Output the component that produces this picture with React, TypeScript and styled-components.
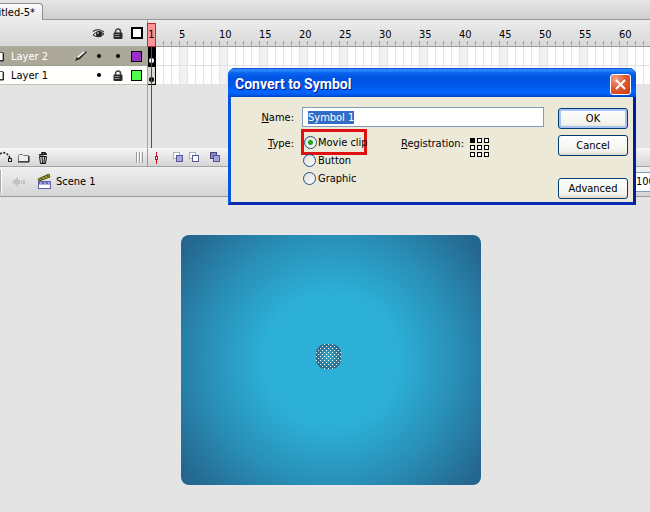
import React, { useEffect, useRef, useState } from 'react';
import styled, { createGlobalStyle, css } from 'styled-components';

const GlobalStyle = createGlobalStyle`
  * { box-sizing: border-box; }
  html, body { height: 100%; }
  body {
    margin: 0;
    overflow: hidden;
    background: #e4e4e4;
    color: #000;
    font-family: "DejaVu Sans Condensed", "Noto Sans", sans-serif;
    font-size: 11px;
    line-height: 14px;
  }
  #root { height: 100%; }
  button, input { font: inherit; color: inherit; }
  svg { flex: none; }
`;

const Workspace = styled.div`
  position: relative;
  display: flex;
  flex-direction: column;
  height: 100%;
  overflow: hidden;
`;

const TabBar = styled.header`
  display: flex;
  align-items: flex-end;
  height: 20px;
  background: linear-gradient(#e6e6e6, #cfcfcf);
  border-bottom: 1px solid #999;
`;

const DocumentTab = styled.button`
  display: flex;
  justify-content: flex-end;
  align-items: center;
  width: 43px;
  height: 17px;
  margin-bottom: -1px;
  padding: 1px 7px 0 0;
  border: 1px solid #8e8e8e;
  border-width: 1px 1px 0 0;
  border-radius: 0 4px 0 0;
  background: linear-gradient(#fafafa, #e9e9e9);
  white-space: nowrap;
  overflow: hidden;
`;

const Timeline = styled.section`
  position: relative;
  display: grid;
  grid-template-columns: 148px 1fr;
  grid-template-rows: 128px 19px;
`;

const LayerPanel = styled.div`
  border-right: 1px solid #a9a191;
`;

const layerColumns = css`
  display: grid;
  grid-template-columns: 72px 17px 19px 19px 19px;
  align-items: center;
  justify-items: center;
`;

const LayerHeader = styled.div`
  ${layerColumns}
  height: 27px;
  background: linear-gradient(#ececec, #d8d8d8);
  border-bottom: 1px solid #b4b0a6;
`;

const LayerRow = styled.div<{ $active?: boolean }>`
  ${layerColumns}
  height: 19px;
  background: ${p => (p.$active ? '#aca899' : '#fffffd')};
  color: ${p => (p.$active ? '#fff' : '#000')};
  border-bottom: 1px solid ${p => (p.$active ? '#a39f91' : '#c8c5b8')};
`;

const LayerName = styled.span`
  display: flex;
  align-items: center;
  gap: 7px;
  padding-top: 2px;
  justify-self: start;
  white-space: nowrap;
`;

const Swatch = styled.span<{ $color: string; $thick?: boolean }>`
  width: ${p => (p.$thick ? 12 : 11)}px;
  height: ${p => (p.$thick ? 12 : 11)}px;
  background: ${p => p.$color};
  border: ${p => (p.$thick ? 2 : 1)}px solid #000;
`;

const Dot = styled.span`
  width: 4px;
  height: 4px;
  border-radius: 50%;
  background: #000;
`;

const FramePanel = styled.div`
  min-width: 0;
  overflow: hidden;
`;

const Ruler = styled.div`
  display: flex;
  height: 27px;
  padding: 8px 0 0 31px;
  background:
    repeating-linear-gradient(90deg, transparent 0 7px, #9a9a9a 7px 8px) 0 21px / 100% 4px no-repeat,
    linear-gradient(#ececec, #d8d8d8);
  border-bottom: 1px solid #999;
`;

const RulerNumber = styled.span`
  flex: 0 0 40px;
`;

const FrameRow = styled.div`
  height: 19px;
  border-bottom: 1px solid #e2e2e2;
  background:
    repeating-linear-gradient(90deg, transparent 0 7px, #e4e4e4 7px 8px),
    repeating-linear-gradient(90deg, transparent 0 32px, #f1f1f1 32px 40px),
    #fff;
`;

const Keyframe = styled.div<{ $filled?: boolean }>`
  display: flex;
  justify-content: center;
  align-items: flex-end;
  width: 8px;
  height: 19px;
  padding-bottom: 2px;
  border: 1px solid #000;
  border-left-width: 0;
  background: ${p => (p.$filled ? '#000' : '#d8d8d0')};

  &::after {
    content: '';
    width: 5px;
    height: 5px;
    border-radius: 50%;
    background: ${p => (p.$filled ? '#fff' : '#000')};
  }
`;

const Playhead = styled.div`
  position: absolute;
  left: 147px;
  top: 3px;
  width: 9px;
  height: 24px;
  padding-top: 4px;
  background: #ff9494;
  border: 1px solid #c4262e;
  text-align: center;
  line-height: 14px;
`;

const PlayheadLine = styled.div`
  position: absolute;
  z-index: 1;
  left: 151px;
  top: 27px;
  bottom: 19px;
  width: 1px;
  background: #d80c2c;
`;

const ToolStrip = styled.div<{ $divided?: boolean }>`
  display: flex;
  align-items: center;
  background: linear-gradient(#f5f5f5, #d5d5d5);
  border-top: 1px solid #f8f8f8;
  border-bottom: 1px solid #a4a4a4;
  border-right: ${p => (p.$divided ? '1px solid #999' : '0')};
`;

const IconButton = styled.button<{ $width: number }>`
  display: flex;
  justify-content: center;
  align-items: center;
  width: ${p => p.$width}px;
  height: 16px;
  padding: 0;
  border: 0;
  background: none;
`;

const Grip = styled.span`
  width: 7px;
  height: 11px;
  margin-left: auto;
  margin-right: 4px;
  background: repeating-linear-gradient(90deg, #999 0 1px, #fff 1px 2px, transparent 2px 3px);
`;

const EditBar = styled.nav`
  display: flex;
  align-items: center;
  height: 30px;
  background: linear-gradient(#f0f0f0, #d4d4d4);
  border-bottom: 1px solid #999;
`;

const EditBarGrip = styled.span`
  width: 2px;
  height: 23px;
  background: #aaa;
  border-right: 1px solid #fff;
`;

const SceneLink = styled.a`
  display: flex;
  align-items: center;
  gap: 4px;
  margin-left: 2px;
  color: inherit;
  text-decoration: none;
`;

const ZoomField = styled.input`
  width: 60px;
  height: 20px;
  margin-left: auto;
  margin-right: -44px;
  padding: 0 0 0 1px;
  border: 1px solid #7f9db9;
  background: #fff;
`;

const ZoomSpacer = styled.div`
  display: flex;
  flex: 1;
  overflow: hidden;
`;

const Stage = styled.main`
  display: flex;
  flex: 1;
  justify-content: center;
  align-items: flex-start;
  padding: 38px 0 0 12px;
  background: #e4e4e4;
`;

const Artwork = styled.div`
  display: flex;
  justify-content: center;
  align-items: center;
  width: 300px;
  height: 250px;
  padding: 0 4px 6px 0;
  border-radius: 8px;
  background: radial-gradient(circle at 50% 50%, #2cb0d8 0 66px, #298fb7 125px, #24668e 185px);
  box-shadow: 0 0 1px #fff;
`;

const Dialog = styled.form`
  position: absolute;
  z-index: 2;
  left: 228px;
  right: 14px;
  top: 68px;
  border: solid #0831c9;
  border-width: 0 3px 3px;
  border-color: #0831d9 #001ea0 #0a28b0 #0855dd;
  border-radius: 7px 7px 0 0;
  background: #0855dd;
`;

const TitleBar = styled.div`
  display: flex;
  align-items: center;
  justify-content: space-between;
  height: 29px;
  margin: 0 -3px;
  padding: 3px 5px 0 7px;
  border-radius: 7px 7px 0 0;
  background: linear-gradient(#0a4fcb 0, #3190ff 2px, #0a63ee 5px, #0054e3 10px, #0056e8 17px, #0066ff 24px, #0061f5 26px, #0040c4 29px);
`;

const DialogTitle = styled.h1`
  margin: 0;
  color: #fff;
  font-family: Roboto, sans-serif;
  font-size: 14px;
  font-weight: 700;
  line-height: 18px;
  text-shadow: 1px 1px #0f1089;
`;

const CloseButton = styled.button`
  display: flex;
  align-items: center;
  justify-content: center;
  width: 21px;
  height: 21px;
  padding: 0;
  border: 1px solid #fff;
  border-radius: 3px;
  background: radial-gradient(circle at 25% 20%, #f2a184, #e25b36 45%, #c5390f);
`;

const DialogBody = styled.div`
  display: grid;
  grid-template-columns: 1fr 70px;
  column-gap: 14px;
  padding: 10px 5px 3px 0;
  background: #ece9d8;
`;

const Fields = styled.div`
  display: grid;
  grid-template-columns: 63px 1fr;
  grid-template-rows: 20px auto;
  column-gap: 8px;
  row-gap: 2px;
`;

const FieldLabel = styled.label`
  padding-top: 4px;
  text-align: right;
`;

const TypeLabel = styled.span`
  padding-top: 8px;
  text-align: right;
`;

const NameInput = styled.input`
  width: 100%;
  height: 20px;
  padding: 0 0 0 5px;
  border: 1px solid #7f9db9;
  outline: none;
  background: #fff;

  &::selection { background: rgba(49, 106, 197, 0.99); color: #fff; }
`;

const TypeRow = styled.div`
  display: flex;
  align-items: flex-start;
`;

const RadioGroup = styled.div`
  display: flex;
  flex-direction: column;
  width: 100px;
  margin-left: -1px;
`;

const RadioLabel = styled.label<{ $marked?: boolean }>`
  display: flex;
  align-items: center;
  align-self: flex-start;
  gap: ${p => (p.$marked ? 1 : 2)}px;
  width: 66px;
  height: ${p => (p.$marked ? 26 : 18)}px;
  padding-left: ${p => (p.$marked ? 0 : 2)}px;
  border: ${p => (p.$marked ? '3px solid #e01010' : '0')};
  white-space: nowrap;

  &:nth-child(2) { margin-top: -4px; }
`;

const RadioText = styled.span`
  padding-top: 2px;
`;

const Radio = styled.input`
  appearance: none;
  flex: none;
  width: 13px;
  height: 13px;
  margin: 0;
  border: 1px solid #1d5281;
  border-radius: 50%;
  background: linear-gradient(135deg, #dcdcd7, #fff);

  &:checked {
    background: radial-gradient(circle, #21a121 0 2px, transparent 3px), linear-gradient(135deg, #dcdcd7, #fff);
  }
`;

const RegistrationLabel = styled.span`
  padding-top: 8px;
`;

const RegistrationGrid = styled.div`
  display: grid;
  grid-template-columns: repeat(3, 5px);
  gap: 2px;
  margin: 9px 0 0 6px;
`;

const RegistrationPoint = styled.button<{ $selected: boolean }>`
  width: 5px;
  height: 5px;
  padding: 0;
  border: 1px solid #000;
  background: ${p => (p.$selected ? '#000' : '#fff')};
`;

const Actions = styled.div`
  display: flex;
  flex-direction: column;
  gap: 6px;
  padding-top: 1px;
`;

const ActionButton = styled.button<{ $primary?: boolean; $last?: boolean }>`
  height: 21px;
  margin-top: ${p => (p.$last ? 16 : 0)}px;
  padding: 1px 0 0;
  border: 1px solid #003c74;
  border-radius: 3px;
  background: linear-gradient(#fff, #f2f1ec 80%, #dcd8ca);
  box-shadow: ${p => (p.$primary ? 'inset 0 0 0 2px #a6c3f2' : 'none')};
`;

const EyeIcon = () => (
  <svg width="13" height="11" viewBox="0 0 13 11">
    <path d="M1 7Q6 1 12 6Q7 11 1 7Z" fill="#ddd" stroke="#222" />
    <path d="M1 3.500Q6-.5 12 4" fill="none" stroke="#444" strokeWidth="1.2" />
    <circle cx="7" cy="6" r="3" fill="#222" />
    <circle cx="6" cy="5" r="1" fill="#aaa" />
  </svg>
);

const LockIcon = () => (
  <svg width="10" height="11" viewBox="0 0 10 11">
    <path d="M2.500 5V3.500a2.500 2.500 0 0 1 5 0V5" fill="none" stroke="#444" strokeWidth="1.5" />
    <rect x=".5" y="4.500" width="9" height="6.500" rx="1" fill="#2a2a2a" />
    <path d="M1.500 6.500h5M1.500 8.500h5" stroke="#888" />
  </svg>
);

const PencilIcon = () => (
  <svg width="14" height="12" viewBox="0 0 14 12">
    <path d="M1 11l2-4 7-6 3 1-7 7z" fill="#222" />
    <path d="M3.500 7.500l7-6" stroke="#eee" strokeWidth="1.8" />
  </svg>
);

const PageIcon = () => (
  <svg width="4" height="11" viewBox="0 0 4 11">
    <path d="M0 .5h3v8H0" fill="#fff" stroke="#555" />
    <path d="M0 9h3.500V1" fill="none" stroke="#222" />
  </svg>
);

const GuideIcon = () => (
  <svg width="13" height="13" viewBox="0 0 13 13">
    <path d="M0 3Q6-1 10 7" fill="none" stroke="#222" strokeWidth="1.6" strokeDasharray="2 1.500" />
    <rect x="8.500" y="7.500" width="3" height="3" fill="#ddd" stroke="#222" />
  </svg>
);

const FolderIcon = () => (
  <svg width="12" height="10" viewBox="0 0 12 10">
    <path d="M.5 8.500V2.500l1-1h3l1 1h5v6z" fill="#eee" stroke="#777" />
    <path d="M0 9h11V3" fill="none" stroke="#111" />
  </svg>
);

const TrashIcon = () => (
  <svg width="11" height="12" viewBox="0 0 11 12">
    <path d="M1 3l8-1M4 2V.8h3V2" fill="none" stroke="#111" strokeWidth="1.4" />
    <path d="M1.500 4.500h7l-1 7h-5z" fill="#ddd" stroke="#111" />
    <path d="M4 5l.5 6M6.500 5L6 11" stroke="#111" />
  </svg>
);

const CenterFrameIcon = () => (
  <svg width="5" height="12" viewBox="0 0 5 12">
    <path d="M2.500 0v4M2.500 8v4" stroke="#d4101c" />
    <rect x="1.500" y="4.500" width="2" height="3" fill="#fff" stroke="#d4101c" />
  </svg>
);

const OnionIcon = ({ back, front }: { back: string; front: string }) => (
  <svg width="11" height="11" viewBox="0 0 11 11">
    <rect x=".5" y=".5" width="6" height="6" fill={back} stroke={back === '#fff' ? '#aaaad0' : '#444488'} />
    <rect x="3.500" y="3.500" width="6" height="6" fill={front} stroke="#555599" />
  </svg>
);

const BackIcon = () => (
  <svg width="14" height="12" viewBox="0 0 14 12">
    <path d="M0 6l6-5v3h2v4H6v3zM9 4h1v4H9zM11 4h2v4h-2z" fill="#c2c2c2" />
  </svg>
);

const SceneIcon = () => (
  <svg width="15" height="17" viewBox="0 0 15 17">
    <path d="M1 6L12 1l1 3L2 8z" fill="#a3a11d" stroke="#555514" />
    <path d="M4 5l1 2M7 3l1 2M10 2l1 2" stroke="#444" />
    <rect x="1.500" y="8.500" width="12" height="7" fill="#fff" stroke="#5c5cae" />
    <path d="M2 10h12" stroke="#6666b5" strokeWidth="3" />
    <path d="M3 10h10" stroke="#ddf" strokeDasharray="2 2" />
  </svg>
);

const CloseIcon = () => (
  <svg width="13" height="13" viewBox="0 0 13 13">
    <path d="M2 2l9 9M11 2l-9 9" stroke="#fff" strokeWidth="2" />
  </svg>
);

const SelectedShape = () => (
  <svg width="26" height="26" viewBox="0 0 26 26">
    <defs>
      <radialGradient id="shapeFill">
        <stop offset="0" stopColor="#34b4cf" />
        <stop offset="1" stopColor="#28698c" />
      </radialGradient>
      <pattern id="shapeDots" width="4" height="4" patternUnits="userSpaceOnUse">
        <rect width="1" height="1" fill="#fff" />
        <rect x="2" y="2" width="1" height="1" fill="#fff" />
      </pattern>
    </defs>
    <rect width="25" height="25" rx="9" fill="url(#shapeFill)" />
    <rect width="25" height="25" rx="9" fill="url(#shapeDots)" />
  </svg>
);

const rulerNumbers = Array.from({ length: 12 }, (_, i) => (i + 1) * 5);
const symbolTypes = ['Movie clip', 'Button', 'Graphic'];

export default function App() {
  const nameRef = useRef<HTMLInputElement>(null);
  const [type, setType] = useState('Movie clip');
  const [origin, setOrigin] = useState(0);

  useEffect(() => {
    nameRef.current?.focus();
    nameRef.current?.select();
  }, []);

  return (
    <>
      <GlobalStyle />
      <Workspace>
        <TabBar><DocumentTab>Untitled-5*</DocumentTab></TabBar>
        <Timeline>
          <LayerPanel>
            <LayerHeader>
              <span /><span /><EyeIcon /><LockIcon /><Swatch $color="#fff" $thick />
            </LayerHeader>
            <LayerRow $active>
              <LayerName><PageIcon />Layer 2</LayerName>
              <PencilIcon /><Dot /><Dot /><Swatch $color="#9b30c8" />
            </LayerRow>
            <LayerRow>
              <LayerName><PageIcon />Layer 1</LayerName>
              <span /><Dot /><LockIcon /><Swatch $color="#4cff4c" />
            </LayerRow>
          </LayerPanel>
          <FramePanel>
            <Ruler>{rulerNumbers.map(n => <RulerNumber key={n}>{n}</RulerNumber>)}</Ruler>
            <FrameRow><Keyframe $filled /></FrameRow>
            <FrameRow><Keyframe /></FrameRow>
          </FramePanel>
          <ToolStrip $divided>
            <IconButton type="button" $width={13} aria-label="Add motion guide"><GuideIcon /></IconButton>
            <IconButton type="button" $width={22} aria-label="Insert layer folder"><FolderIcon /></IconButton>
            <IconButton type="button" $width={16} aria-label="Delete layer"><TrashIcon /></IconButton>
            <Grip />
          </ToolStrip>
          <ToolStrip>
            <IconButton type="button" $width={17} aria-label="Center frame"><CenterFrameIcon /></IconButton>
            <IconButton type="button" $width={27} aria-label="Onion skin"><OnionIcon back="#fff" front="#a5a5d8" /></IconButton>
            <IconButton type="button" $width={5} aria-label="Onion skin outlines"><OnionIcon back="#fff" front="#ffffff" /></IconButton>
            <IconButton type="button" $width={37} aria-label="Edit multiple frames"><OnionIcon back="#8585c0" front="#a5a5d8" /></IconButton>
          </ToolStrip>
          <Playhead>1</Playhead>
          <PlayheadLine />
        </Timeline>
        <EditBar>
          <EditBarGrip />
          <IconButton type="button" $width={33} aria-label="Back"><BackIcon /></IconButton>
          <SceneLink href="#scene-1"><SceneIcon />Scene 1</SceneLink>
          <ZoomSpacer><ZoomField aria-label="Zoom" defaultValue="100%" /></ZoomSpacer>
        </EditBar>
        <Stage><Artwork><SelectedShape /></Artwork></Stage>

        <Dialog onSubmit={e => e.preventDefault()} role="dialog" aria-labelledby="dialog-title">
          <TitleBar>
            <DialogTitle id="dialog-title">Convert to Symbol</DialogTitle>
            <CloseButton type="button" aria-label="Close"><CloseIcon /></CloseButton>
          </TitleBar>
          <DialogBody>
            <Fields>
              <FieldLabel htmlFor="symbol-name"><u>N</u>ame:</FieldLabel>
              <NameInput id="symbol-name" ref={nameRef} defaultValue="Symbol 1" />
              <TypeLabel id="type-label"><u>T</u>ype:</TypeLabel>
              <TypeRow>
                <RadioGroup role="radiogroup" aria-labelledby="type-label">
                  {symbolTypes.map((t, i) => (
                    <RadioLabel key={t} $marked={i === 0}>
                      <Radio type="radio" name="type" checked={type === t} onChange={() => setType(t)} />
                      <RadioText>{t}</RadioText>
                    </RadioLabel>
                  ))}
                </RadioGroup>
                <RegistrationLabel><u>R</u>egistration:</RegistrationLabel>
                <RegistrationGrid>
                  {Array.from({ length: 9 }, (_, i) => (
                    <RegistrationPoint key={i} type="button" aria-label={`Registration point ${i + 1}`}
                      $selected={origin === i} onClick={() => setOrigin(i)} />
                  ))}
                </RegistrationGrid>
              </TypeRow>
            </Fields>
            <Actions>
              <ActionButton $primary>OK</ActionButton>
              <ActionButton type="button">Cancel</ActionButton>
              <ActionButton type="button" $last>Advanced</ActionButton>
            </Actions>
          </DialogBody>
        </Dialog>
      </Workspace>
    </>
  );
}
